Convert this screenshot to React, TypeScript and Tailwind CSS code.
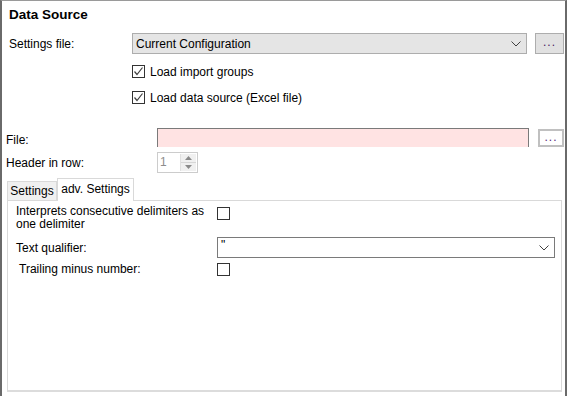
import React from 'react'

const font = { fontFamily: '"Liberation Sans", Arial, sans-serif' }

function Chevron({ color = '#404040' }: { color?: string }) {
  return (
    <svg width="10" height="6" viewBox="0 0 10 6" className="shrink-0">
      <path d="M0.5 0.5 L5 5 L9.5 0.5" fill="none" stroke={color} strokeWidth="1" />
    </svg>
  )
}

function CheckBox({ checked = false }: { checked?: boolean }) {
  return (
    <div className="w-[13px] h-[13px] border border-[#333333] bg-white shrink-0 flex items-center justify-center">
      {checked && (
        <svg width="11" height="11" viewBox="0 0 11 11">
          <path d="M1.5 5.5 L4 8.5 L9.5 1.5" fill="none" stroke="#404040" strokeWidth="1.2" />
        </svg>
      )}
    </div>
  )
}

export default function App() {
  return (
    <div style={font} className="w-[568px] h-[397px] bg-white text-[12px] text-black overflow-hidden">
      <div className="w-[567px] h-[396px] border-t border-t-[#9a9a9a] border-l-2 border-r-2 border-[#6a6a6a] flex flex-col">
        <div className="pl-[7px] pt-[6px] h-[32px] text-[13.5px] font-bold leading-[16px]">Data Source</div>

        <div className="flex items-center h-[21px]">
          <div className="w-[130px] pl-[7px]">Settings file:</div>
          <div className="w-[395px] h-[21px] bg-[#e5e5e5] border border-[#adadad] flex items-center justify-between pl-[3px] pr-[5px]">
            <span>Current Configuration</span>
            <Chevron />
          </div>
          <div className="ml-[8px] w-[29px] h-[21px] bg-[#e1e1e1] border border-[#adadad] flex items-center justify-center text-[12px] tracking-[1px] leading-none pb-[3px] text-[#4a2060]">...</div>
        </div>

        <div className="flex items-center gap-[5px] ml-[130px] mt-[11px] h-[13px]">
          <CheckBox checked />
          <span>Load import groups</span>
        </div>
        <div className="flex items-center gap-[5px] ml-[130px] mt-[13px] h-[13px]">
          <CheckBox checked />
          <span>Load data source (Excel file)</span>
        </div>

        <div className="flex items-start mt-[24px] h-[19px]">
          <div className="w-[155px] pl-[4px] pt-[3px]">File:</div>
          <div className="w-[372px] h-[19px] bg-[#ffe3e3] border border-b-0 border-[#7a7a7a]" />
          <div className="ml-[9px] mt-[1px] w-[26px] h-[18px] bg-white border-2 border-[#c0c0c0] flex items-center justify-center text-[12px] tracking-[1px] leading-none pb-[3px] text-[#5a2a7a]">...</div>
        </div>

        <div className="flex items-center mt-[5px] h-[21px]">
          <div className="w-[155px] pl-[4px]">Header in row:</div>
          <div className="w-[41px] h-[21px] border border-[#cccccc] flex">
            <div className="flex-1 pl-[2px] text-[#8d8d8d] leading-[19px]">1</div>
            <div className="w-[16px] flex flex-col border-l border-[#e0e0e0] my-[1px] mr-[1px]">
              <div className="flex-1 bg-[#f0f0f0] flex items-center justify-center border-b border-[#d6d6d6]">
                <svg width="7" height="4" viewBox="0 0 7 4"><path d="M0 4 L3.5 0 L7 4 Z" fill="#8a8a8a" /></svg>
              </div>
              <div className="flex-1 bg-[#f0f0f0] flex items-center justify-center">
                <svg width="7" height="4" viewBox="0 0 7 4"><path d="M0 0 L3.5 4 L7 0 Z" fill="#8a8a8a" /></svg>
              </div>
            </div>
          </div>
        </div>

        <div className="flex items-end ml-[5px] mt-[4px] h-[23px]">
          <div className="w-[50px] h-[19px] bg-[#f0f0f0] border border-b-0 border-[#d9d9d9] flex items-center justify-center">Settings</div>
          <div className="w-[77px] h-[23px] bg-white border border-b-0 border-[#d9d9d9] flex items-center justify-center pb-[2px] -mb-px relative">adv. Settings</div>
        </div>

        <div className="ml-[5px] w-[555px] h-[192px] border border-[#d9d9d9] border-b-2 border-b-[#dcdcdc] bg-white flex flex-col">
          <div className="flex items-start pt-[4px]">
            <div className="w-[209px] pl-[8px] leading-[13px]">Interprets consecutive delimiters as one delimiter</div>
            <div className="mt-[2px]"><CheckBox /></div>
          </div>
          <div className="flex items-center mt-[6px] h-[21px]">
            <div className="w-[209px] pl-[8px]">Text qualifier:</div>
            <div className="w-[338px] h-[21px] border border-[#7a7a7a] bg-white flex items-start justify-between pl-[3px] pr-[5px]">
              <span className="leading-[14px]">"</span>
              <div className="self-center"><Chevron /></div>
            </div>
          </div>
          <div className="flex items-center mt-[4px] h-[14px]">
            <div className="w-[209px] pl-[11px]">Trailing minus number:</div>
            <CheckBox />
          </div>
        </div>
      </div>
    </div>
  )
}
